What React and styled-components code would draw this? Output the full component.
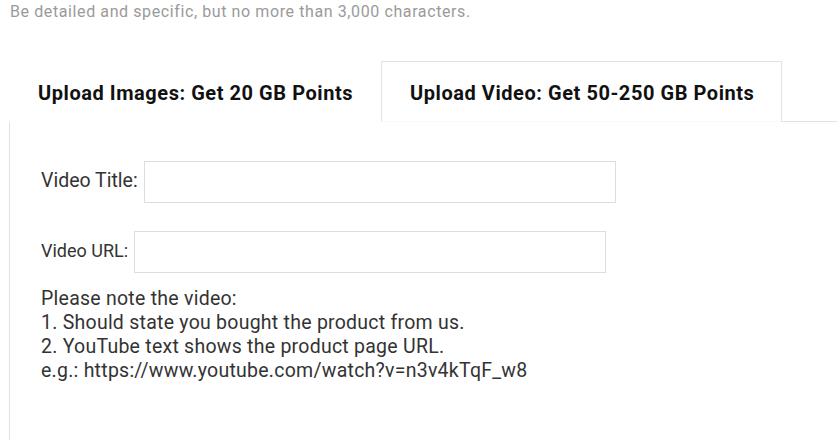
import React, { useState } from 'react'
import styled, { createGlobalStyle } from 'styled-components'

const Global = createGlobalStyle`
    html, body {
        margin: 0;
        padding: 0;
        background: #fff;
        font-family: Roboto, "Liberation Sans", Arial, sans-serif;
    }
`

const tabs = [
    { id: 'images', label: 'Upload Images: Get 20 GB Points' },
    { id: 'video', label: 'Upload Video: Get 50-250 GB Points' }
]

const notes = [
    'Please note the video:',
    '1. Should state you bought the product from us.',
    '2. YouTube text shows the product page URL.',
    'e.g.: https://www.youtube.com/watch?v=n3v4kTqF_w8'
]

const App = () => {
    const [active, setActive] = useState('video')
    const [title, setTitle] = useState('')
    const [url, setUrl] = useState('')

    return (
        <Page>
            <Global />
            <Hint>Be detailed and specific, but no more than 3,000 characters.</Hint>
            <TabBar>
                {tabs.map(t => (
                    <Tab key={t.id} type="button" active={active === t.id} onClick={() => setActive(t.id)}>
                        {t.label}
                    </Tab>
                ))}
            </TabBar>
            <Panel>
                <Field>
                    <Label size={19.5}>Video Title:</Label>
                    <Input value={title} onChange={e => setTitle(e.target.value)} />
                </Field>
                <Field>
                    <Label size={18}>Video URL:</Label>
                    <Input value={url} onChange={e => setUrl(e.target.value)} />
                </Field>
                <Notes>
                    {notes.map(n => <p key={n}>{n}</p>)}
                </Notes>
            </Panel>
        </Page>
    )
}

const Page = styled.div`
    padding-left: 9px;
    height: 440px;
    display: flex;
    flex-direction: column;
    overflow: hidden;
`
const Hint = styled.div`
    padding: 1px 0 0 1px;
    font-size: 16px;
    line-height: 21px;
    letter-spacing: 0.6px;
    color: #9a9a9a;
`
const TabBar = styled.div`
    display: flex;
    margin-top: 39px;
    border-bottom: 1px solid #e2e2e2;
`
const Tab = styled.button`
    height: 61px;
    margin-bottom: -1px;
    padding: 2px 27px 0 28px;
    font-family: inherit;
    font-size: 20px;
    font-weight: 700;
    letter-spacing: 0.55px;
    color: #111;
    background: #fff;
    border: 1px solid ${props => props.active ? '#e2e2e2' : 'transparent'};
    border-bottom-color: ${props => props.active ? '#fafafa' : 'transparent'};
    cursor: pointer;
`
const Panel = styled.div`
    flex: 1;
    border-left: 1px solid #e2e2e2;
    padding: 39px 0 0 31px;
`
const Field = styled.div`
    display: flex;
    align-items: center;
    gap: 6px;
    margin-bottom: 28px;

    &:nth-child(2) {
        margin-bottom: 14px;
    }
`
const Label = styled.label`
    font-size: ${props => props.size}px;
    color: #333;
    margin-top: -4px;
`
const Input = styled.input`
    width: 472px;
    height: 42px;
    box-sizing: border-box;
    border: 1px solid #dedede;
    outline: none;
    font-family: inherit;
    font-size: 16px;
    padding: 0 10px;
`
const Notes = styled.div`
    font-size: 19.5px;
    line-height: 24px;
    letter-spacing: 0.25px;
    color: #333;

    p {
        margin: 0;
    }
`

export default App
